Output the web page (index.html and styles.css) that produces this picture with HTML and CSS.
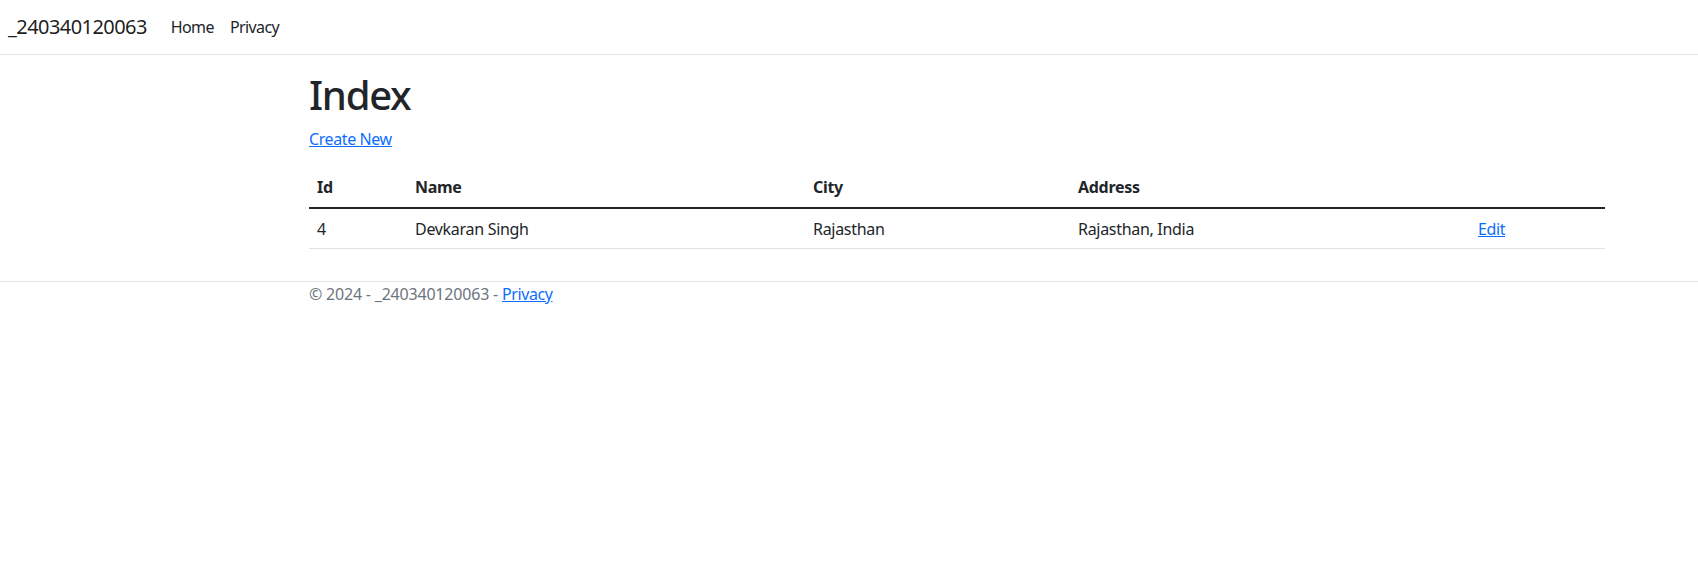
FILE: index.html
```html
<!DOCTYPE html>
<html lang="en">
<head>
<meta charset="utf-8">
<title>Index - _240340120063</title>
<link rel="stylesheet" href="styles.css">
</head>
<body>
<header class="site-header">
  <nav class="navbar">
    <a class="brand" href="#">_240340120063</a>
    <ul class="nav">
      <li><a class="nav-link" href="#">Home</a></li>
      <li><a class="nav-link" href="#">Privacy</a></li>
    </ul>
  </nav>
</header>
<div class="container">
  <main class="main">
    <h1 class="title">Index</h1>
    <p class="create"><a class="link" href="#">Create New</a></p>
    <table class="table">
      <thead>
        <tr>
          <th class="col-id">Id</th>
          <th class="col-name">Name</th>
          <th class="col-city">City</th>
          <th class="col-address">Address</th>
          <th class="col-actions"></th>
        </tr>
      </thead>
      <tbody>
        <tr>
          <td>4</td>
          <td>Devkaran Singh</td>
          <td>Rajasthan</td>
          <td>Rajasthan, India</td>
          <td><a class="link" href="#">Edit</a></td>
        </tr>
      </tbody>
    </table>
  </main>
</div>
<footer class="footer">
  <div class="container">
    &copy; 2024 - _240340120063 - <a class="link" href="#">Privacy</a>
  </div>
</footer>
</body>
</html>
```
FILE: styles.css
```css
* { box-sizing: border-box; }

html, body {
  margin: 0;
  padding: 0;
  background: #fff;
}

body {
  font-family: "Noto Sans", "Open Sans", sans-serif;
  font-size: 16px;
  line-height: 1.5;
  color: #212529;
}

.site-header {
  border-bottom: 1px solid #dee2e6;
  margin-bottom: 16px;
}

.navbar {
  height: 54px;
  display: flex;
  align-items: center;
  padding: 0 8px;
}

.brand {
  font-size: 20px;
  line-height: 30px;
  color: rgba(0, 0, 0, 0.9);
  text-decoration: none;
  margin-right: 16px;
  letter-spacing: -0.57px;
}

.nav {
  list-style: none;
  margin: 0;
  padding: 0;
  display: flex;
}

.nav-link {
  display: block;
  padding: 0 8px;
  color: #212529;
  text-decoration: none;
  line-height: 24px;
  letter-spacing: -0.6px;
}

.container {
  width: 1320px;
  margin-left: 297px;
  padding: 0 12px;
}

.main {
  padding-bottom: 16px;
}

.title {
  font-size: 40px;
  line-height: 48px;
  font-weight: 500;
  margin: 0 0 8px;
  letter-spacing: -1.3px;
}

.create {
  margin: 0 0 16px;
}

.link {
  color: #0d6efd;
  text-decoration: underline;
  letter-spacing: -0.4px;
}

.table {
  width: 100%;
  border-collapse: collapse;
  margin-bottom: 16px;
  table-layout: fixed;
}

.table th,
.table td {
  padding: 8px;
  text-align: left;
  vertical-align: top;
  border-bottom: 1px solid #dee2e6;
  letter-spacing: -0.3px;
}

.table td {
  padding-bottom: 7px;
}

.table th {
  font-weight: 700;
}

.table tbody {
  border-top: 2px solid #212529;
}

.col-id { width: 98px; }
.col-name { width: 398px; }
.col-city { width: 265px; }
.col-address { width: 400px; }
.col-actions { width: 135px; }

.footer {
  border-top: 1px solid #dee2e6;
  color: #6c757d;
  line-height: 24px;
  white-space: nowrap;
  letter-spacing: -0.2px;
}
```
